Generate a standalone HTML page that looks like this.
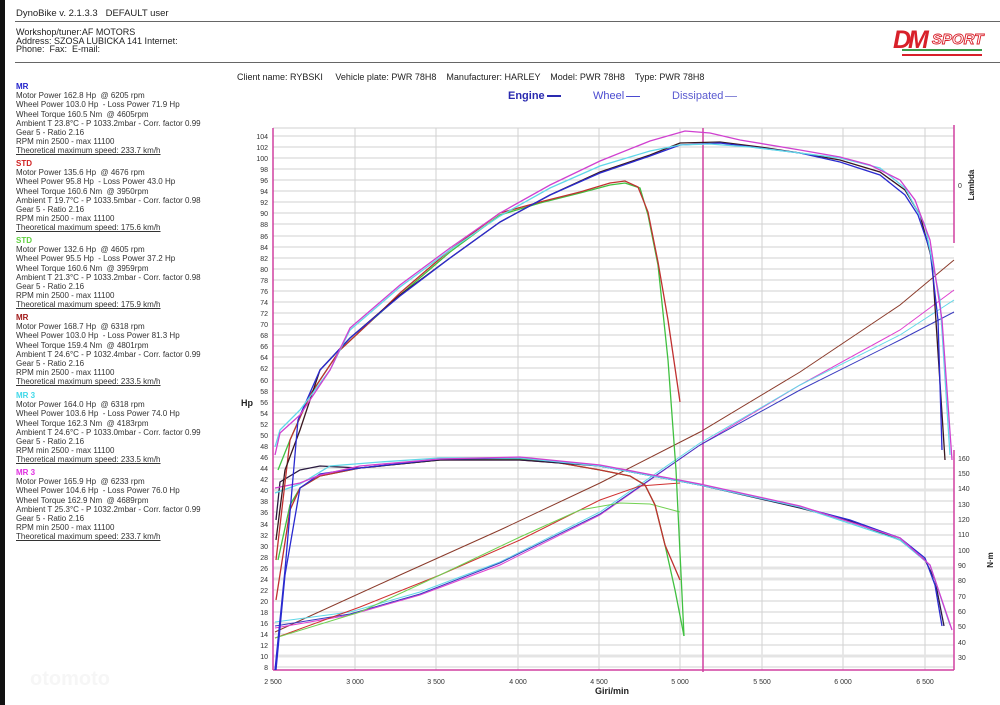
<!DOCTYPE html>
<html><head><meta charset="utf-8"><style>
html,body{margin:0;padding:0;}
body{width:1000px;height:705px;position:relative;background:#fff;font-family:"Liberation Sans",Arial,sans-serif;color:#222;overflow:hidden;}
.t{position:absolute;white-space:nowrap;}
.blk{position:absolute;left:16px;font-size:8px;line-height:9.2px;color:#333;}
.blk b{font-size:8px;display:block;}
.blk u{display:block;}
</style></head><body>
<div style="position:absolute;left:0;top:0;width:5px;height:705px;background:#111"></div>
<div class="t" style="left:16px;top:8px;font-size:9.5px">DynoBike v. 2.1.3.3 &nbsp; DEFAULT user</div>
<div style="position:absolute;left:15px;top:21px;width:985px;height:1px;background:#666"></div>
<div class="t" style="left:16px;top:28px;font-size:9px;line-height:8.5px">Workshop/tuner:AF MOTORS<br>Address: SZOSA LUBICKA 141 Internet:<br>Phone: &nbsp;Fax: &nbsp;E-mail:</div>
<div style="position:absolute;left:15px;top:62px;width:985px;height:1px;background:#666"></div>
<svg style="position:absolute;left:890px;top:24px" width="105" height="36">
<text x="3" y="24" font-family="Liberation Sans" font-weight="bold" font-style="italic" font-size="25" fill="#d8202a" letter-spacing="-3">DM</text>
<text x="42" y="20" font-family="Liberation Sans" font-weight="bold" font-style="italic" font-size="15" fill="#fff" stroke="#d8202a" stroke-width="0.9">SPORT</text>
<rect x="12" y="25" width="80" height="2" fill="#3a9a4a"/><rect x="12" y="28" width="80" height="1" fill="#fff"/><rect x="12" y="30" width="80" height="2" fill="#d8202a"/>
</svg>

<div class="blk" style="top:82px"><b style="color:#2222cc">MR</b>Motor Power 162.8 Hp &nbsp;@ 6205 rpm<br>Wheel Power 103.0 Hp &nbsp;- Loss Power 71.9 Hp<br>Wheel Torque 160.5 Nm &nbsp;@ 4605rpm<br>Ambient T 23.8°C - P 1033.2mbar - Corr. factor 0.99<br>Gear 5 - Ratio 2.16<br>RPM min 2500 - max 11100<u>Theoretical maximum speed: 233.7 km/h</u></div>
<div class="blk" style="top:159px"><b style="color:#d02020">STD</b>Motor Power 135.6 Hp &nbsp;@ 4676 rpm<br>Wheel Power 95.8 Hp &nbsp;- Loss Power 43.0 Hp<br>Wheel Torque 160.6 Nm &nbsp;@ 3950rpm<br>Ambient T 19.7°C - P 1033.5mbar - Corr. factor 0.98<br>Gear 5 - Ratio 2.16<br>RPM min 2500 - max 11100<u>Theoretical maximum speed: 175.6 km/h</u></div>
<div class="blk" style="top:236px"><b style="color:#60d040">STD</b>Motor Power 132.6 Hp &nbsp;@ 4605 rpm<br>Wheel Power 95.5 Hp &nbsp;- Loss Power 37.2 Hp<br>Wheel Torque 160.6 Nm &nbsp;@ 3959rpm<br>Ambient T 21.3°C - P 1033.2mbar - Corr. factor 0.98<br>Gear 5 - Ratio 2.16<br>RPM min 2500 - max 11100<u>Theoretical maximum speed: 175.9 km/h</u></div>
<div class="blk" style="top:313px"><b style="color:#a01818">MR</b>Motor Power 168.7 Hp &nbsp;@ 6318 rpm<br>Wheel Power 103.0 Hp &nbsp;- Loss Power 81.3 Hp<br>Wheel Torque 159.4 Nm &nbsp;@ 4801rpm<br>Ambient T 24.6°C - P 1032.4mbar - Corr. factor 0.99<br>Gear 5 - Ratio 2.16<br>RPM min 2500 - max 11100<u>Theoretical maximum speed: 233.5 km/h</u></div>
<div class="blk" style="top:391px"><b style="color:#40d8e8">MR 3</b>Motor Power 164.0 Hp &nbsp;@ 6318 rpm<br>Wheel Power 103.6 Hp &nbsp;- Loss Power 74.0 Hp<br>Wheel Torque 162.3 Nm &nbsp;@ 4183rpm<br>Ambient T 24.6°C - P 1033.0mbar - Corr. factor 0.99<br>Gear 5 - Ratio 2.16<br>RPM min 2500 - max 11100<u>Theoretical maximum speed: 233.5 km/h</u></div>
<div class="blk" style="top:468px"><b style="color:#e030e0">MR 3</b>Motor Power 165.9 Hp &nbsp;@ 6233 rpm<br>Wheel Power 104.6 Hp &nbsp;- Loss Power 76.0 Hp<br>Wheel Torque 162.9 Nm &nbsp;@ 4689rpm<br>Ambient T 25.3°C - P 1032.2mbar - Corr. factor 0.99<br>Gear 5 - Ratio 2.16<br>RPM min 2500 - max 11100<u>Theoretical maximum speed: 233.7 km/h</u></div>

<div class="t" style="left:237px;top:72px;font-size:9px">Client name: RYBSKI &nbsp; &nbsp; Vehicle plate: PWR 78H8 &nbsp; &nbsp;Manufacturer: HARLEY &nbsp; &nbsp;Model: PWR 78H8 &nbsp; &nbsp;Type: PWR 78H8</div>
<div class="t" style="left:508px;top:90px;font-size:11px;font-weight:bold;color:#2a2ab0">Engine<span style="display:inline-block;width:14px;height:2px;background:#2a2ab0;vertical-align:middle;margin-left:2px"></span></div>
<div class="t" style="left:593px;top:90px;font-size:11px;color:#4a4ad0">Wheel<span style="display:inline-block;width:14px;height:1px;background:#4a4ad0;vertical-align:middle;margin-left:2px"></span></div>
<div class="t" style="left:672px;top:90px;font-size:11px;color:#5a5ad0">Dissipated<span style="display:inline-block;width:12px;height:1px;background:#8888d8;vertical-align:middle;margin-left:2px"></span></div>

<svg style="position:absolute;left:0;top:0" width="1000" height="705" font-family="Liberation Sans" >
<g stroke="#d2d2d2" stroke-width="1">
<line x1="273" y1="128" x2="954" y2="128"/>
<line x1="273" y1="136" x2="954" y2="136"/><line x1="273" y1="147" x2="954" y2="147"/><line x1="273" y1="158" x2="954" y2="158"/><line x1="273" y1="169" x2="954" y2="169"/><line x1="273" y1="180" x2="954" y2="180"/><line x1="273" y1="191" x2="954" y2="191"/><line x1="273" y1="202" x2="954" y2="202"/><line x1="273" y1="213" x2="954" y2="213"/><line x1="273" y1="224" x2="954" y2="224"/><line x1="273" y1="236" x2="954" y2="236"/><line x1="273" y1="247" x2="954" y2="247"/><line x1="273" y1="258" x2="954" y2="258"/><line x1="273" y1="269" x2="954" y2="269"/><line x1="273" y1="280" x2="954" y2="280"/><line x1="273" y1="291" x2="954" y2="291"/><line x1="273" y1="302" x2="954" y2="302"/><line x1="273" y1="313" x2="954" y2="313"/><line x1="273" y1="324" x2="954" y2="324"/><line x1="273" y1="335" x2="954" y2="335"/><line x1="273" y1="346" x2="954" y2="346"/><line x1="273" y1="357" x2="954" y2="357"/><line x1="273" y1="368" x2="954" y2="368"/><line x1="273" y1="380" x2="954" y2="380"/><line x1="273" y1="391" x2="954" y2="391"/><line x1="273" y1="402" x2="954" y2="402"/><line x1="273" y1="413" x2="954" y2="413"/><line x1="273" y1="424" x2="954" y2="424"/><line x1="273" y1="435" x2="954" y2="435"/><line x1="273" y1="446" x2="954" y2="446"/><line x1="273" y1="457" x2="954" y2="457"/><line x1="273" y1="468" x2="954" y2="468"/><line x1="273" y1="479" x2="954" y2="479"/><line x1="273" y1="490" x2="954" y2="490"/><line x1="273" y1="501" x2="954" y2="501"/><line x1="273" y1="512" x2="954" y2="512"/><line x1="273" y1="524" x2="954" y2="524"/><line x1="273" y1="535" x2="954" y2="535"/><line x1="273" y1="546" x2="954" y2="546"/><line x1="273" y1="557" x2="954" y2="557"/><line x1="273" y1="568" x2="954" y2="568"/><line x1="273" y1="579" x2="954" y2="579"/><line x1="273" y1="590" x2="954" y2="590"/><line x1="273" y1="601" x2="954" y2="601"/><line x1="273" y1="612" x2="954" y2="612"/><line x1="273" y1="623" x2="954" y2="623"/><line x1="273" y1="634" x2="954" y2="634"/><line x1="273" y1="645" x2="954" y2="645"/><line x1="273" y1="656" x2="954" y2="656"/><line x1="273" y1="667" x2="954" y2="667"/>
<line x1="355" y1="128" x2="355" y2="670"/><line x1="436" y1="128" x2="436" y2="670"/><line x1="518" y1="128" x2="518" y2="670"/><line x1="599" y1="128" x2="599" y2="670"/><line x1="680" y1="128" x2="680" y2="670"/><line x1="762" y1="128" x2="762" y2="670"/><line x1="843" y1="128" x2="843" y2="670"/><line x1="925" y1="128" x2="925" y2="670"/>
</g>
<g stroke="#e4e4e4" stroke-width="3"><line x1="273" y1="490" x2="954" y2="490"/><line x1="273" y1="568" x2="954" y2="568"/><line x1="273" y1="579" x2="954" y2="579"/><line x1="273" y1="656" x2="954" y2="656"/></g>
<g stroke="#d040a0" stroke-width="1.5" fill="none">
<line x1="273" y1="128" x2="273" y2="670"/><line x1="703" y1="128" x2="703" y2="672"/><line x1="954" y1="125" x2="954" y2="243"/><line x1="954" y1="450" x2="954" y2="670"/><line x1="273" y1="670" x2="954" y2="670"/>
</g>
<g font-size="7" fill="#333" text-anchor="end">
<text x="268" y="139">104</text><text x="268" y="161">100</text><text x="268" y="150">102</text><text x="268" y="172">98</text><text x="268" y="183">96</text><text x="268" y="194">94</text><text x="268" y="205">92</text><text x="268" y="216">90</text><text x="268" y="227">88</text><text x="268" y="239">86</text><text x="268" y="250">84</text><text x="268" y="261">82</text><text x="268" y="272">80</text><text x="268" y="283">78</text><text x="268" y="294">76</text><text x="268" y="305">74</text><text x="268" y="316">72</text><text x="268" y="327">70</text><text x="268" y="338">68</text><text x="268" y="349">66</text><text x="268" y="360">64</text><text x="268" y="371">62</text><text x="268" y="383">60</text><text x="268" y="394">58</text><text x="268" y="405">56</text><text x="268" y="416">54</text><text x="268" y="427">52</text><text x="268" y="438">50</text><text x="268" y="449">48</text><text x="268" y="460">46</text><text x="268" y="471">44</text><text x="268" y="482">42</text><text x="268" y="493">40</text><text x="268" y="504">38</text><text x="268" y="515">36</text><text x="268" y="527">34</text><text x="268" y="538">32</text><text x="268" y="549">30</text><text x="268" y="560">28</text><text x="268" y="571">26</text><text x="268" y="582">24</text><text x="268" y="593">22</text><text x="268" y="604">20</text><text x="268" y="615">18</text><text x="268" y="626">16</text><text x="268" y="637">14</text><text x="268" y="648">12</text><text x="268" y="659">10</text><text x="268" y="670">8</text>
</g>
<g font-size="7" fill="#333">
<text x="958" y="461">160</text><text x="958" y="476">150</text><text x="958" y="491">140</text><text x="958" y="507">130</text><text x="958" y="522">120</text><text x="958" y="537">110</text><text x="958" y="553">100</text><text x="958" y="568">90</text><text x="958" y="583">80</text><text x="958" y="599">70</text><text x="958" y="614">60</text><text x="958" y="629">50</text><text x="958" y="645">40</text><text x="958" y="660">30</text><text x="958" y="188">0</text>
</g>
<g font-size="7" fill="#333" text-anchor="middle">
<text x="273" y="684">2 500</text><text x="355" y="684">3 000</text><text x="436" y="684">3 500</text><text x="518" y="684">4 000</text><text x="599" y="684">4 500</text><text x="680" y="684">5 000</text><text x="762" y="684">5 500</text><text x="843" y="684">6 000</text><text x="925" y="684">6 500</text>
</g>
<text x="612" y="694" font-size="9" font-weight="bold" text-anchor="middle" fill="#222">Giri/min</text>
<text x="247" y="406" font-size="9" font-weight="bold" text-anchor="middle" fill="#222">Hp</text>
<text transform="translate(974,185) rotate(-90)" font-size="8" font-weight="bold" text-anchor="middle" fill="#222">Lambda</text>
<text transform="translate(993,560) rotate(-90)" font-size="8" font-weight="bold" text-anchor="middle" fill="#222">N·m</text>

<g fill="none" stroke-width="1.3">
<polyline stroke="#8a3a2a" stroke-width="1" points="275,632 400,575 500,530 600,483 700,432 800,372 900,305 954,260"/>
<polyline stroke="#e040d0" stroke-width="1" points="275,628 350,615 420,595 500,565 600,515 700,445 800,385 900,330 954,290"/>
<polyline stroke="#60d8e8" stroke-width="1" points="275,622 350,612 420,592 500,562 600,512 700,443 800,385 900,335 954,300"/>
<polyline stroke="#3a3ac0" stroke-width="1" points="275,626 350,614 420,594 500,563 600,514 700,445 800,390 900,340 954,312"/>
<polyline stroke="#d03030" stroke-width="1" points="275,638 360,607 440,575 520,540 600,500 640,486 680,483"/>
<polyline stroke="#70d050" stroke-width="1" points="275,638 360,612 440,575 520,537 580,510 620,503 650,504 680,512"/>
<polyline stroke="#40c040" points="278,560 290,505 300,488 320,476 360,468 440,460 520,459 560,463 600,470 630,476 645,485 655,505 665,545 675,590 684,636"/>
<polyline stroke="#c03030" points="276,600 290,510 300,488 320,476 360,468 440,460 520,460 560,463 600,470 630,476 645,485 655,505 665,545 680,580"/>
<polyline stroke="#2a1a40" points="276,520 280,482 300,470 320,466 360,468 440,460 520,460 600,466 700,485 800,508 850,521 900,540 925,560 935,580 944,626"/>
<polyline stroke="#2a2ad0" points="276,670 285,575 300,488 320,474 360,468 440,459 520,458 600,466 700,485 800,507 850,520 900,538 925,558 935,585 942,626"/>
<polyline stroke="#60d8e8" points="275,493 300,484 330,466 380,462 440,458 520,458 600,466 700,485 800,507 900,540 930,565 950,625"/>
<polyline stroke="#d040d0" points="275,488 300,483 320,475 360,466 440,459 520,457 600,465 700,484 800,506 900,538 930,565 952,630"/>
<polyline stroke="#40c040" points="278,470 290,440 310,395 340,350 370,322 400,295 450,252 500,215 540,203 580,193 610,185 625,183 640,188 648,215 658,265 668,360 676,470 684,636"/>
<polyline stroke="#c03030" points="276,560 290,440 310,395 340,350 370,322 400,293 450,250 500,213 540,202 580,192 610,183 625,181 638,187 648,212 658,262 668,320 680,402"/>
<polyline stroke="#3a1820" points="276,540 285,470 300,430 320,370 350,338 400,295 450,258 500,222 550,195 600,172 650,155 680,143 720,142 760,147 800,153 840,160 880,172 905,190 920,215 932,260 945,460"/>
<polyline stroke="#2a2ad0" points="275,670 285,570 298,420 320,370 350,338 400,296 450,258 500,222 550,195 600,173 650,156 680,145 720,143 760,148 800,153 840,162 880,175 905,195 918,215 930,250 938,320 942,450"/>
<polyline stroke="#60d8e8" points="275,447 280,430 300,410 330,370 350,330 400,287 450,250 500,216 550,188 600,166 650,151 680,145 710,144 750,147 800,153 840,158 880,168 905,188 925,225 940,300 950,455"/>
<polyline stroke="#d040d0" points="275,455 280,433 300,415 330,370 350,328 400,285 450,248 500,213 550,185 600,161 650,141 685,131 710,133 740,140 800,150 840,157 870,165 900,180 915,200 930,240 942,320 952,460"/>
</g>
</svg>
<div class="t" style="left:30px;top:668px;font-size:20px;color:rgba(210,210,210,0.2);font-weight:bold">otomoto</div>
</body></html>
